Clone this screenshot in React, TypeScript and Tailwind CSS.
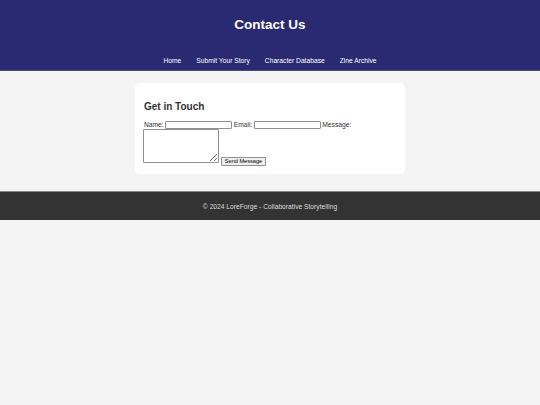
export default function App() {
  return (
    <div className="min-h-[405px] bg-[#f4f4f4] font-['Liberation_Sans',Arial,sans-serif] text-[#333]">
      <header className="bg-[#2a2a72] text-white text-center pt-[17px] pb-[5px] border-b border-[#4b4a85]">
        <h1 className="text-[13.5px] leading-[16px] font-bold">Contact Us</h1>
        <nav className="mt-[24px] flex justify-center gap-[15px] text-[6.7px] leading-[8px]">
          <a href="#">Home</a>
          <a href="#">Submit Your Story</a>
          <a href="#">Character Database</a>
          <a href="#">Zine Archive</a>
        </nav>
      </header>

      <main className="pt-[12px]">
        <section className="mx-auto w-[270px] bg-white rounded-[5px] px-[9px] pt-[18px] pb-[11px]">
          <h2 className="text-[10px] leading-[12px] font-bold mb-[8px]">Get in Touch</h2>
          <form className="text-[6.7px] leading-[8px]">
            <div className="flex items-center h-[8px]">
              <label>Name:</label>
              <input className="ml-[1.5px] w-[67px] h-[8px] border border-[#8f8f8f] rounded-[1px] bg-white" />
              <label className="ml-[1.5px]">Email:</label>
              <input className="ml-[1.5px] w-[67px] h-[8px] border border-[#8f8f8f] rounded-[1px] bg-white" />
              <label className="ml-[1.5px]">Message:</label>
            </div>
            <div className="flex items-end">
              <textarea className="-ml-px w-[76px] h-[34px] border border-[#8f8f8f] rounded-[1px] resize-y bg-white" />
              <button
                type="button"
                className="ml-[2px] -mb-[3px] w-[45px] h-[9px] bg-[#efefef] border border-[#8f8f8f] rounded-[1px] text-[5.6px] leading-[7px] text-black"
              >
                Send Message
              </button>
            </div>
          </form>
        </section>
      </main>

      <footer className="mt-[17px] bg-[#333] border-t border-[#888] text-[#ddd] text-center text-[6.7px] leading-[8px] pt-[11px] pb-[9px]">
        © 2024 LoreForge - Collaborative Storytelling
      </footer>
    </div>
  );
}
